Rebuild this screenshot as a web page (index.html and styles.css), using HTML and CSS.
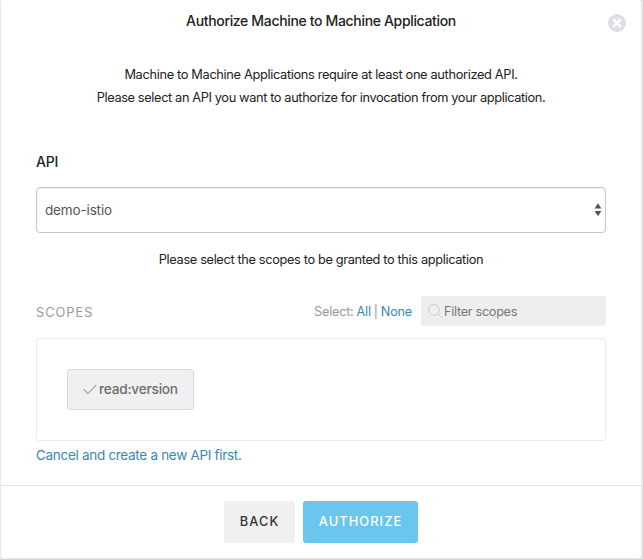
FILE: index.html
```html
<!DOCTYPE html>
<html lang="en">
<head>
<meta charset="utf-8">
<title>Authorize Machine to Machine Application</title>
<link rel="stylesheet" href="styles.css">
</head>
<body>
<div class="modal">
  <header class="modal-header">
    <h1 class="title">Authorize Machine to Machine Application</h1>
    <button class="close" aria-label="Close">
      <svg width="18" height="18" viewBox="0 0 18 18"><circle cx="9" cy="9" r="9" fill="#dcdfe2"/><path d="M5.2 5.2l7.6 7.6M12.8 5.2l-7.6 7.6" stroke="#fff" stroke-width="2.4"/></svg>
    </button>
  </header>
  <main class="modal-body">
    <div class="intro">
      <p class="intro-first">Machine to Machine Applications require at least one authorized API.</p>
      <p class="intro-second">Please select an API you want to authorize for invocation from your application.</p>
    </div>
    <div class="label"><span>API</span></div>
    <div class="select">
      <span class="select-value">demo-istio</span>
      <svg width="8" height="14" viewBox="0 0 8 14" fill="#555"><path d="M4 .3l3.4 5.2H.6zM.6 8h6.8L4 13.2z"/></svg>
    </div>
    <p class="hint"><span>Please select the scopes to be granted to this application</span></p>
    <div class="scopes-bar">
      <span class="scopes-title">SCOPES</span>
      <div class="pick"><span class="pick-label">Select:</span><a class="pick-all">All</a><span class="pick-sep">|</span><a class="pick-none">None</a></div>
      <div class="filter">
        <svg width="14" height="14" viewBox="0 0 14 14" fill="none" stroke="#c9c9c9"><circle cx="5.9" cy="5.9" r="5.3"/><path d="M9.7 9.7l3.6 3.6"/></svg>
        <span class="filter-text">Filter scopes</span>
      </div>
    </div>
    <div class="scopes-box">
      <div class="scope">
        <svg width="14" height="11" viewBox="0 0 14 11" fill="none" stroke="#777"><path d="M.8 5.2l4.1 4.5L13.2 1"/></svg>
        <span class="scope-name">read:version</span>
      </div>
    </div>
    <a class="cancel">Cancel and create a new API first.</a>
  </main>
  <footer class="modal-footer">
    <button class="btn btn-back"><span>BACK</span></button>
    <button class="btn btn-primary"><span>AUTHORIZE</span></button>
  </footer>
</div>
</body>
</html>
```
FILE: styles.css
```css
* { box-sizing: border-box; }
body { margin: 0; background: #e8e8e8; font-family: Inter, "Liberation Sans", sans-serif; font-size: 13px; color: #222; white-space: nowrap; }
h1, p { margin: 0; }
button { border: 0; padding: 0; font-family: inherit; }
a { color: #3a87b0; }
.modal { display: flex; flex-direction: column; width: 640px; height: 558px; margin-left: 1px; background: #fff; border-radius: 3px; overflow: hidden; }
.modal-header { display: grid; grid-template-columns: 52px 1fr 52px; align-items: center; height: 42px; }
.title { grid-column: 2; padding-bottom: 2px; text-align: center; font-size: 14px; font-weight: 500; letter-spacing: -0.34px; }
.close { justify-self: end; width: 18px; height: 18px; margin: 4px 15px 0 0; background: none; }
.close svg, .select svg, .filter svg, .scope svg { display: block; flex: none; }
.modal-body { display: flex; flex-direction: column; height: 443px; padding: 21px 35px 0; }
.intro { text-align: center; line-height: 23px; height: 90px; }
.intro-first, .intro-second, .hint { font-size: 12.8px; letter-spacing: -0.36px; }
.intro-first { letter-spacing: -0.34px; }
.intro-second { letter-spacing: -0.38px; }
.label { height: 34px; line-height: 18px; font-size: 14px; font-weight: 500; letter-spacing: -0.2px; }
.select { display: flex; align-items: center; justify-content: space-between; height: 46px; padding: 0 3px 0 8px; border: 1px solid #c6c6c6; border-radius: 4px; box-shadow: inset 0 1px 2px #eee; font-size: 13.5px; letter-spacing: -0.15px; color: #555; }
.scope-name { padding-bottom: 2px; }
.hint { height: 63px; padding-top: 17px; line-height: 20px; text-align: center; }
.scopes-bar { display: flex; align-items: center; height: 30px; }
.scopes-title { flex: 1; padding-top: 2px; font-size: 12.8px; color: #999; letter-spacing: 1px; }
.pick { display: flex; gap: 3px; margin-right: 9px; padding-top: 1px; font-size: 12.7px; letter-spacing: -0.22px; color: #999; }
.filter { display: flex; align-items: center; gap: 2px; width: 185px; height: 30px; padding-left: 7px; border-radius: 3px; background: #eee; color: #777; font-size: 12.7px; letter-spacing: -0.3px; }
.filter-text { padding-top: 1px; }
.scopes-box { height: 103px; margin-top: 12px; padding: 30px; border: 1px solid #ebebeb; border-radius: 3px; }
.scope { display: flex; align-items: center; gap: 2px; width: 127px; height: 41px; padding-left: 15px; border: 1px solid #d9d9d9; border-radius: 3px; background: #f0f0f0; color: #6f6f6f; font-size: 13.7px; letter-spacing: -0.25px; font-weight: 500; }
.cancel { margin-top: 4px; line-height: 20px; font-size: 13.5px; letter-spacing: -0.3px; }
.modal-footer { display: flex; justify-content: center; gap: 8px; height: 73px; padding-top: 15px; border-top: 1px solid #e2e2e2; }
.btn { height: 42px; padding-bottom: 1px; border-radius: 3px; font-size: 12.8px; font-weight: 500; letter-spacing: 1.1px; }
.btn-back { width: 71px; background: #f0f0f0; color: #333; }
.btn-primary { width: 115px; background: #6ac5ef; color: #fff; }
```
